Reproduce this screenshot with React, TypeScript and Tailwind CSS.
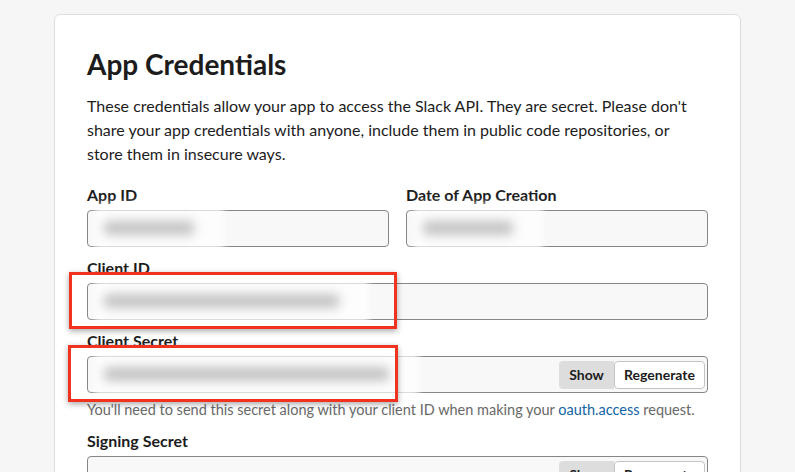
import React from "react";

const font = { fontFamily: "Lato, 'Noto Sans', sans-serif" };

function Blur({ w }: { w: number }) {
  return (
    <div className="absolute left-[6px] top-[-8px] h-[52px] rounded-md bg-white/70 blur-[3px]" style={{ width: w + 40 }}>
      <div className="absolute left-[10px] top-[18px] h-[14px] rounded-sm bg-[#c2c2c2] blur-[4px]" style={{ width: w }} />
    </div>
  );
}

function Field({
  label,
  blurW,
  buttons,
  box,
}: {
  label: string;
  blurW: number;
  buttons?: boolean;
  box?: { left: number; width: number };
}) {
  return (
    <div className="flex flex-col">
      <label className="mt-[10px] mb-[4px] text-[16px] leading-[22px] font-bold text-[#1d1c1d]">{label}</label>
      <div className="relative h-[37px] rounded-[4px] border border-[#868686] bg-[#f8f8f8] flex items-center justify-end pr-[2px]">
        {blurW > 0 && <Blur w={blurW} />}
        {buttons && (
          <div className="flex h-[28px] text-[14px] font-bold text-[#1d1c1d]">
            <div className="flex items-center justify-center w-[55px] rounded-l-[4px] bg-[#dddddd]">Show</div>
            <div className="flex items-center justify-center w-[91px] rounded-[4px] border border-[#c4c4c4] bg-white">Regenerate</div>
          </div>
        )}
        {box && (
          <div
            className="absolute top-[-12px] h-[57px] border-[3px] border-[#f0321e] shadow-[0_2px_6px_rgba(0,0,0,0.35)]"
            style={{ left: box.left, width: box.width }}
          />
        )}
      </div>
    </div>
  );
}

export default function App() {
  return (
    <div className="h-[472px] overflow-hidden bg-[#f6f6f6] pl-[54px] pt-[14px]" style={font}>
      <div className="w-[687px] h-[500px] rounded-t-[6px] border border-[#dddddd] bg-white px-[32px] pt-[31px]">
        <h1 className="text-[28px] leading-[36px] font-bold text-[#1d1c1d]">App Credentials</h1>
        <p className="mt-[12px] text-[16px] leading-[24px] text-[#1d1c1d]">
          These credentials allow your app to access the Slack API. They are secret. Please don't share your app
          credentials with anyone, include them in public code repositories, or store them in insecure ways.
        </p>
        <div className="mt-[8px] grid grid-cols-2 gap-x-[17px]">
          <Field label="App ID" blurW={90} />
          <Field label="Date of App Creation" blurW={90} />
        </div>
        <Field label="Client ID" blurW={235} box={{ left: -19, width: 328 }} />
        <Field label="Client Secret" blurW={285} buttons box={{ left: -20, width: 330 }} />
        <p className="mt-[7px] text-[14.5px] leading-[20px] text-[#696969]">
          You'll need to send this secret along with your client ID when making your{" "}
          <span className="text-[#1264a3]">oauth.access</span> request.
        </p>
        <Field label="Signing Secret" blurW={0} buttons />
      </div>
    </div>
  );
}
